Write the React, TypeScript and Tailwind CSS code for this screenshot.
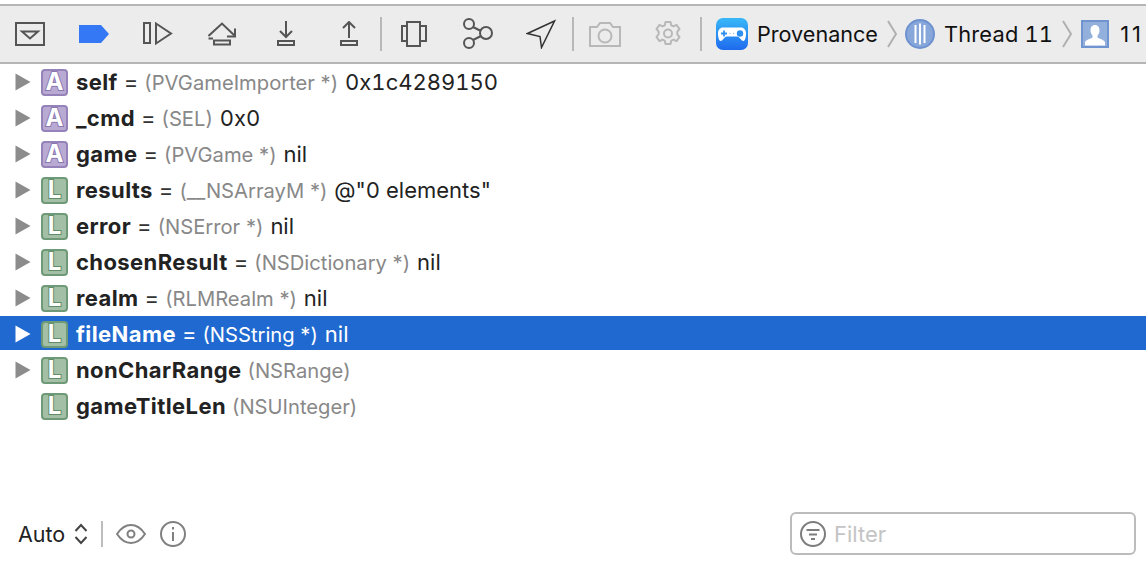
import React from "react";

const stroke = "#555555";

/* ── toolbar icons ── */
const HideIcon = () => (
  <svg width="30" height="24" viewBox="0 0 30 24" className="ml-[15px] flex-none" fill="none" stroke={stroke} strokeWidth="2">
    <rect x="1" y="1" width="28" height="22" />
    <path d="M7 9.500h16l-8 7z" />
  </svg>
);

const BreakIcon = () => (
  <svg width="30" height="18" viewBox="0 0 30 18" className="ml-[34px] flex-none">
    <path d="M0 0h22l8 9-8 9H0z" fill="#3478f6" />
  </svg>
);

const ContinueIcon = () => (
  <svg width="30" height="24" viewBox="0 0 30 24" className="ml-[34px] flex-none" fill="none" stroke={stroke} strokeWidth="2">
    <rect x="1" y="1" width="6" height="20" />
    <path d="M13 1.500l15 10-15 10z" />
  </svg>
);

const StepOverIcon = () => (
  <svg width="28" height="24" viewBox="0 0 28 24" className="ml-[35px] flex-none" fill="none" stroke={stroke} strokeWidth="2">
    <path d="M0.500 14L14 1.500 27 14" />
    <path d="M27 6.500V14.500H19" />
    <path d="M0.500 16.500H5" />
    <rect x="6" y="18.500" width="16" height="4" />
  </svg>
);

const StepIntoIcon = () => (
  <svg width="18" height="26" viewBox="0 0 18 26" className="ml-[41px] flex-none" fill="none" stroke={stroke} strokeWidth="2">
    <path d="M9 0v16M3 10l6 6 6-6" />
    <rect x="1" y="20" width="16" height="4" />
  </svg>
);

const StepOutIcon = () => (
  <svg width="18" height="26" viewBox="0 0 18 26" className="ml-[45px] flex-none" fill="none" stroke={stroke} strokeWidth="2">
    <path d="M9 17V1M3 7l6-6 6 6" />
    <rect x="1" y="20" width="16" height="4" />
  </svg>
);

const ViewDebugIcon = () => (
  <svg width="26" height="26" viewBox="0 0 26 26" className="ml-[19px] flex-none" fill="none" stroke={stroke} strokeWidth="2">
    <rect x="6" y="1" width="13" height="24" />
    <path d="M6 5H1v15h5M19 5h6v15h-6" />
  </svg>
);

const MemoryIcon = () => (
  <svg width="32" height="32" viewBox="0 0 32 32" className="ml-[35px] flex-none" fill="none" stroke={stroke} strokeWidth="2">
    <circle cx="7" cy="6" r="5" />
    <circle cx="7" cy="25" r="5" />
    <circle cx="24" cy="15" r="6" />
    <path d="M11 9l8 4M11 22l8-4" />
  </svg>
);

const LocationIcon = () => (
  <svg width="30" height="30" viewBox="0 0 30 30" className="ml-[32px] flex-none" fill="none" stroke="#333333" strokeWidth="1.500">
    <path d="M28.500 2L1.500 14.500 14 17.500 15.500 28.500z" />
  </svg>
);

const CameraIcon = () => (
  <svg width="32" height="25" viewBox="0 0 32 25" className="ml-[15px] flex-none" fill="none" stroke="#b8b8b8" strokeWidth="2">
    <path d="M1 5h7l3-4h10l3 4h7v19H1z" />
    <circle cx="16" cy="14" r="6.500" />
  </svg>
);

const GearIcon = () => (
  <svg width="28" height="28" viewBox="0 0 28 28" className="ml-[33px] flex-none" fill="none" stroke="#b8b8b8" strokeWidth="2">
    <path d="M11.500 2h5l.8 3.400 2.200 1 3-1.600 3 4.200-2.200 2.600v2.800l2.200 2.600-3 4.200-3-1.600-2.200 1-.8 3.400h-5l-.8-3.400-2.200-1-3 1.600-3-4.200L4.700 14v-2.400L2.500 9l3-4.200 3 1.600 2.200-1z" strokeLinejoin="round" />
    <circle cx="14" cy="13.500" r="4" />
  </svg>
);

const AppIcon = () => (
  <svg width="32" height="32" viewBox="0 0 32 32" className="ml-[14px] flex-none">
    <defs>
      <linearGradient id="appBg" x1="0" y1="0" x2="0" y2="1">
        <stop offset="0" stopColor="#38b8f8" />
        <stop offset="1" stopColor="#1f6aee" />
      </linearGradient>
    </defs>
    <rect width="32" height="32" rx="7" fill="url(#appBg)" />
    <path d="M7 9.500h18c3 0 5 2.500 5 6 0 4-1 7.500-2.800 7.500-2.200 0-3.200-4.500-6.200-4.500H11c-3 0-4 4.500-6.200 4.500C3 23 2 19.500 2 15.500c0-3.500 2-6 5-6z" fill="#ffffff" />
    <path d="M8 12.500v6M5 15.500h6" stroke="#2f8fee" strokeWidth="1.800" />
    <path d="M13.500 15.500h1M17 15.500h1" stroke="#7fb5f0" strokeWidth="1.200" />
    <circle cx="24" cy="15.500" r="3.200" fill="#2f8fee" />
  </svg>
);

const Chevron = () => (
  <svg width="10" height="28" viewBox="0 0 10 28" className="ml-[9px] flex-none" fill="none" stroke="#b0b0b0" strokeWidth="2">
    <path d="M1 1l8 13-8 13" />
  </svg>
);

const ThreadIcon = () => (
  <svg width="30" height="30" viewBox="0 0 30 30" className="ml-[8px] flex-none">
    <circle cx="15" cy="15" r="14" fill="#87a6da" stroke="#6d92cf" strokeWidth="2" />
    <path d="M10.500 6v18M15 4.500v21M19.500 6v18" stroke="#ffffff" strokeWidth="2" />
  </svg>
);

const UserIcon = () => (
  <svg width="28" height="28" viewBox="0 0 28 28" className="ml-[9px] flex-none">
    <rect x="1" y="1" width="26" height="26" fill="#93b0dc" stroke="#6f94cf" strokeWidth="2" />
    <path d="M14 5c3 0 4.500 2.300 4.500 5.200 0 2.300-1 4.300-2 5.300v2c1 1 6.500 2 7.500 4.500v3.500H4v-3.500c1-2.500 6.500-3.500 7.500-4.500v-2c-1-1-2-3-2-5.300C9.500 7.300 11 5 14 5z" fill="#ffffff" />
  </svg>
);

const Divider = ({ ml }: { ml: string }) => <div className={`h-[34px] w-[2px] flex-none bg-[#b8b8b8] ${ml}`} />;

/* ── variable rows ── */
type Row = { kind: "A" | "L"; name: string; type: string; value?: string; eq?: boolean; leaf?: boolean };

const rows: Row[] = [
  { kind: "A", name: "self", type: "(PVGameImporter *)", value: "0x1c4289150", eq: true },
  { kind: "A", name: "_cmd", type: "(SEL)", value: "0x0", eq: true },
  { kind: "A", name: "game", type: "(PVGame *)", value: "nil", eq: true },
  { kind: "L", name: "results", type: "(__NSArrayM *)", value: '@"0 elements"', eq: true },
  { kind: "L", name: "error", type: "(NSError *)", value: "nil", eq: true },
  { kind: "L", name: "chosenResult", type: "(NSDictionary *)", value: "nil", eq: true },
  { kind: "L", name: "realm", type: "(RLMRealm *)", value: "nil", eq: true },
  { kind: "L", name: "fileName", type: "(NSString *)", value: "nil", eq: true },
  { kind: "L", name: "nonCharRange", type: "(NSRange)" },
  { kind: "L", name: "gameTitleLen", type: "(NSUInteger)", leaf: true },
];

const Badge = ({ kind }: { kind: "A" | "L" }) => {
  const tone =
    kind === "A"
      ? "bg-[#b9aad4] border-[#9482b9] [-webkit-text-stroke:2px_#8a78b1]"
      : "bg-[#a3c0a6] border-[#6f9a78] [-webkit-text-stroke:2px_#5f8d69]";
  return (
    <div className={`ml-[10px] flex h-[27px] w-[27px] flex-none items-center justify-center rounded-[4px] border-2 text-[24px] font-bold leading-none text-white [paint-order:stroke_fill] ${tone}`}>
      {kind}
    </div>
  );
};

const VarRow = ({ row, selected }: { row: Row; selected: boolean }) => (
  <div className={`flex h-9 items-center pl-[15px] ${selected ? "border-b-2 border-white bg-[#2069d0] pt-[2px]" : ""}`}>
    {row.leaf ? (
      <div className="w-[16px] flex-none" />
    ) : (
      <svg width="16" height="18" viewBox="0 0 16 18" className="flex-none">
        <path d="M0.500 0.500L15.500 9 0.500 17.500z" fill={selected ? "#ffffff" : "#8c8c8c"} />
      </svg>
    )}
    <Badge kind={row.kind} />
    <div className="ml-[8px] flex items-baseline whitespace-pre pt-[1px] text-[22px]">
      <span className={`font-bold tracking-[0.4px] ${selected ? "text-white" : "text-[#222222]"}`}>{row.name}</span>
      {row.eq ? <span className={`ml-[6px] ${selected ? "text-white" : "text-[#333333]"}`}>=</span> : null}
      <span className={`ml-[6px] text-[20.2px] ${selected ? "text-white" : "text-[#888888]"}`}>{row.type}</span>
      {row.value ? (
        <span className={`ml-[7px] tabular-nums ${selected ? "text-white" : "text-[#222222]"}`}>{row.value}</span>
      ) : null}
    </div>
  </div>
);

export default function App() {
  return (
    <div className="flex h-[562px] w-[1146px] flex-col overflow-hidden bg-white font-['Inter','Noto_Sans',sans-serif]">
      <div className="mt-1 flex h-[60px] flex-none items-center overflow-hidden whitespace-nowrap border-y-2 border-[#b6b6b6] bg-[#ececec]">
        <HideIcon />
        <BreakIcon />
        <ContinueIcon />
        <StepOverIcon />
        <StepIntoIcon />
        <StepOutIcon />
        <Divider ml="ml-[22px]" />
        <ViewDebugIcon />
        <MemoryIcon />
        <LocationIcon />
        <Divider ml="ml-[16px]" />
        <CameraIcon />
        <GearIcon />
        <Divider ml="ml-[18px]" />
        <AppIcon />
        <span className="ml-[9px] text-[21.6px] text-[#111111]">Provenance</span>
        <Chevron />
        <ThreadIcon />
        <span className="ml-[9px] text-[21.8px] tabular-nums tracking-[0.2px] text-[#111111]">Thread 11</span>
        <Chevron />
        <UserIcon />
        <span className="ml-[11px] text-[21.8px] tracking-[3px] text-[#111111]">11</span>
      </div>

      <div className="flex-1">
        {rows.map((row) => (
          <VarRow key={row.name} row={row} selected={row.name === "fileName"} />
        ))}
      </div>

      <div className="flex h-[56px] flex-none items-center pb-[1px] pl-[18px] pr-[10px]">
        <span className="pt-[1px] text-[21.5px] text-[#222222]">Auto</span>
        <svg width="14" height="22" viewBox="0 0 14 22" className="ml-[9px] flex-none" fill="none" stroke="#444444" strokeWidth="2">
          <path d="M1.500 8L7 2l5.500 6M1.500 14L7 20l5.500-6" />
        </svg>
        <div className="ml-[13px] h-[26px] w-[2px] flex-none bg-[#bdbdbd]" />
        <svg width="30" height="22" viewBox="0 0 30 22" className="ml-[13px] flex-none" fill="none" stroke="#808080" strokeWidth="2">
          <path d="M1 11c4-6 9-9 14-9s10 3 14 9c-4 6-9 9-14 9S5 17 1 11z" />
          <circle cx="15" cy="11" r="3.500" />
        </svg>
        <svg width="26" height="26" viewBox="0 0 26 26" className="ml-[14px] flex-none" fill="none" stroke="#808080" strokeWidth="2">
          <circle cx="13" cy="13" r="12" />
          <path d="M13 11v9M13 6v2.500" />
        </svg>
        <div className="ml-auto flex h-[43px] w-[346px] items-center rounded-[6px] border-2 border-[#bcbcbc] pl-[8px]">
          <svg width="26" height="26" viewBox="0 0 26 26" className="flex-none" fill="none" stroke="#7d7d7d" strokeWidth="2">
            <circle cx="13" cy="13" r="12" />
            <path d="M6.500 9h13M9 13.500h8M11 18h4" />
          </svg>
          <span className="ml-[8px] pt-[1px] text-[22px] text-[#c4c4c4]">Filter</span>
        </div>
      </div>
    </div>
  );
}
